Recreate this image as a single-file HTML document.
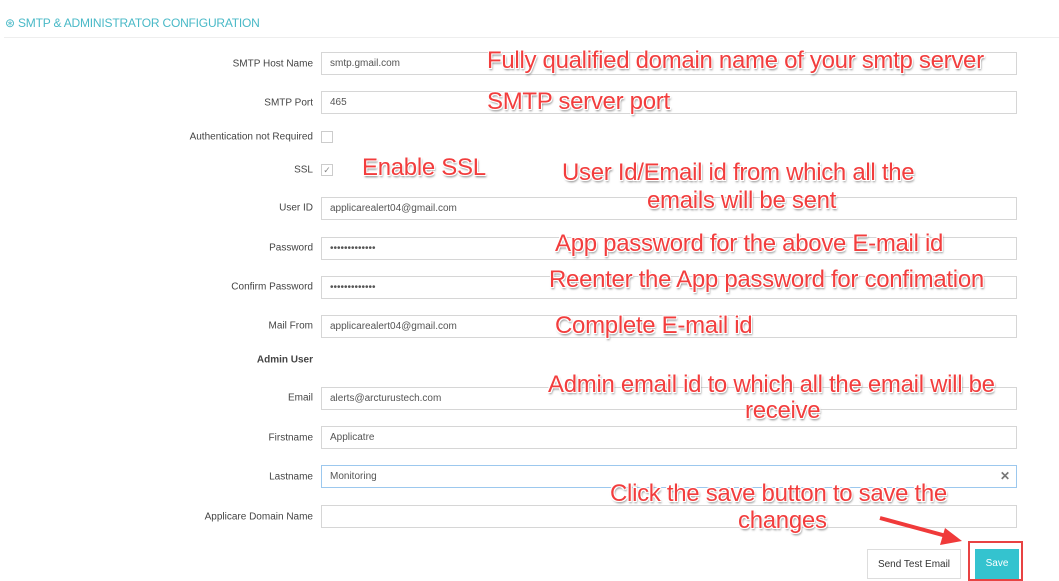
<!DOCTYPE html>
<html><head><style>
body{margin:0;width:1059px;height:575px;background:#fff;font-family:"Liberation Sans",sans-serif;position:relative;overflow:hidden}
.hd{position:absolute;left:5px;top:16px;font-size:12px;color:#49b9c7;letter-spacing:-0.2px}
.line{position:absolute;left:4px;right:0;top:37px;border-top:1px solid #eee}
.lb{position:absolute;right:746px;font-size:10px;color:#444;transform:translateY(-50%)}
.in{position:absolute;left:321px;width:696px;height:23px;border:1px solid #d6d6d6;box-sizing:border-box;font-size:10px;color:#555;padding:5px 0 0 8px;line-height:12px}
.cb{position:absolute;left:321px;width:12px;height:12px;border:1px solid #ccc;box-sizing:border-box;font-size:9px;color:#888;line-height:10px;text-align:center}
.a{position:absolute;font-size:24px;color:#f23d3d;white-space:nowrap;transform:translateY(-50%);letter-spacing:-0.3px;text-shadow:-1px -1px 0 #fff,1px -1px 0 #fff,-1px 1px 0 #fff,1px 1px 0 #fff,1px 2px 2px #777}
.btn{position:absolute;box-sizing:border-box;font-size:10px;text-align:center;padding-top:9px;line-height:12px}
</style></head><body>
<div class="hd">⊛ SMTP &amp; ADMINISTRATOR CONFIGURATION</div>
<div class="line"></div>
<div class="lb" style="top:64px">SMTP Host Name</div><div class="in" style="top:52px">smtp.gmail.com</div>
<div class="lb" style="top:103px">SMTP Port</div><div class="in" style="top:91px">465</div>
<div class="lb" style="top:137px">Authentication not Required</div><div class="cb" style="top:131px"></div>
<div class="lb" style="top:170px">SSL</div><div class="cb" style="top:164px">✓</div>
<div class="lb" style="top:208px">User ID</div><div class="in" style="top:197px">applicarealert04@gmail.com</div>
<div class="lb" style="top:248px">Password</div><div class="in" style="top:237px">•••••••••••••</div>
<div class="lb" style="top:287px">Confirm Password</div><div class="in" style="top:276px">•••••••••••••</div>
<div class="lb" style="top:326px">Mail From</div><div class="in" style="top:315px">applicarealert04@gmail.com</div>
<div class="lb" style="top:360px;font-weight:bold">Admin User</div>
<div class="lb" style="top:398px">Email</div><div class="in" style="top:387px">alerts@arcturustech.com</div>
<div class="lb" style="top:438px">Firstname</div><div class="in" style="top:426px">Applicatre</div>
<div class="lb" style="top:477px">Lastname</div><div class="in" style="top:465px;border-color:#9cc8ee">Monitoring<span style="position:absolute;right:6px;top:4px;color:#777;font-weight:bold;font-size:12px">✕</span></div>
<div class="lb" style="top:517px">Applicare Domain Name</div><div class="in" style="top:505px"></div>
<div class="btn" style="left:867px;top:549px;width:94px;height:30px;border:1px solid #ddd;color:#333">Send Test Email</div>
<div style="position:absolute;left:968px;top:541px;width:55px;height:40px;border:2px solid #e84343;box-sizing:border-box"></div>
<div class="btn" style="left:975px;top:549px;width:44px;height:30px;background:#34c3cf;color:#fff">Save</div>
<div class="a" style="left:487px;top:61px">Fully qualified domain name of your smtp server</div>
<div class="a" style="left:487px;top:102px">SMTP server port</div>
<div class="a" style="left:362px;top:168px">Enable SSL</div>
<div class="a" style="left:562px;top:173px">User Id/Email id from which all the</div>
<div class="a" style="left:647px;top:201px">emails will be sent</div>
<div class="a" style="left:555px;top:244px">App password for the above E-mail id</div>
<div class="a" style="left:549px;top:280px">Reenter the App password for confimation</div>
<div class="a" style="left:555px;top:326px">Complete E-mail id</div>
<div class="a" style="left:548px;top:385px">Admin email id to which all the email will be</div>
<div class="a" style="left:745px;top:411px">receive</div>
<div class="a" style="left:610px;top:494px">Click the save button to save the</div>
<div class="a" style="left:738px;top:521px">changes</div>
<svg style="position:absolute;left:0;top:0" width="1059" height="575"><line x1="880" y1="518" x2="950" y2="537" stroke="#f03a3a" stroke-width="4"/><polygon points="962,541 945,528 940,545" fill="#f03a3a"/></svg>
</body></html>
